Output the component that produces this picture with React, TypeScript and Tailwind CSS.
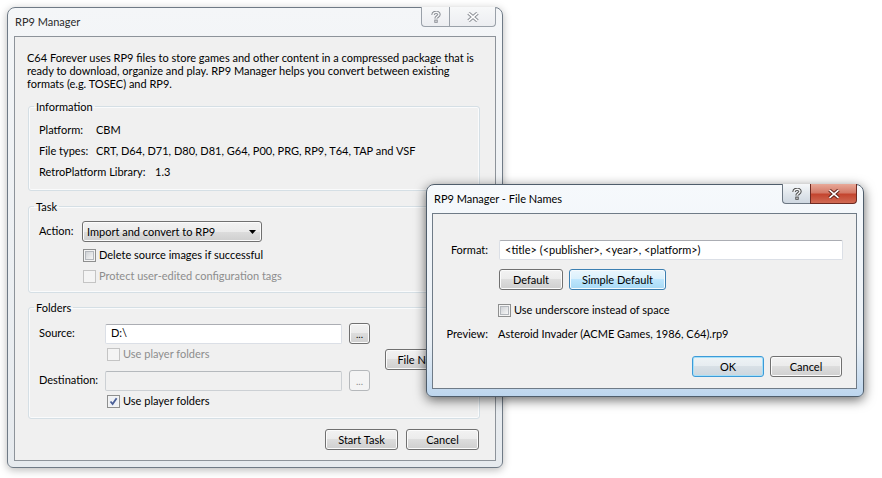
import type { ReactNode } from "react";

type Tone = "normal" | "hot" | "focus" | "disabled";

const tones: Record<Tone, string> = {
  normal:
    "border-[#707070] bg-[linear-gradient(#f2f2f2_0%,#ebebeb_50%,#dddddd_50%,#cfcfcf_100%)] shadow-[inset_0_0_0_1px_#fbfbfb] text-black",
  hot: "border-[#3c7fb1] bg-[linear-gradient(#eaf6fd_0%,#d9f0fc_50%,#bee6fd_50%,#a7d9f5_100%)] shadow-[inset_0_0_0_1px_#f5fbfe] text-black",
  focus:
    "border-[#3c9ad8] bg-[linear-gradient(#eef3f6_0%,#e6ecf0_50%,#d8e0e6_50%,#ccd6de_100%)] shadow-[inset_0_0_0_1px_#a6e0f8] text-black",
  disabled: "border-[#b5b8bb] bg-[#f4f4f4] text-[#8d8d8d]",
};

function Button({
  children,
  tone = "normal",
  className = "",
}: {
  children: ReactNode;
  tone?: Tone;
  className?: string;
}) {
  return (
    <div
      className={`flex h-[21px] items-center justify-center rounded-[3px] border leading-none ${tones[tone]} ${className}`}
    >
      {children}
    </div>
  );
}

function CheckBox({ checked = false, disabled = false }: { checked?: boolean; disabled?: boolean }) {
  if (disabled) {
    return <span className="block h-[13px] w-[13px] shrink-0 border border-[#c4c4c4] bg-[#f4f4f4]" />;
  }
  return (
    <span className="flex h-[13px] w-[13px] shrink-0 items-center justify-center border border-[#8e8f8f] bg-[#f4f4f4]">
      {checked ? (
        <svg width="9" height="9" viewBox="0 0 9 9" className="block">
          <rect x="0" y="0" width="9" height="9" fill="#eef1f6" />
          <path d="M1.5 4.5 L3.6 7 L7.6 1.2" stroke="#4a5f97" strokeWidth="1.8" fill="none" />
        </svg>
      ) : (
        <span className="block h-[9px] w-[9px] border border-[#b3b7bc] bg-[linear-gradient(135deg,#cfd2d6,#f6f6f6)]" />
      )}
    </span>
  );
}

function Check({
  children,
  checked,
  disabled,
}: {
  children: ReactNode;
  checked?: boolean;
  disabled?: boolean;
}) {
  return (
    <div className={`flex h-[21px] items-center gap-[3px] ${disabled ? "text-[#8d8d8d]" : "text-black"}`}>
      <CheckBox checked={checked} disabled={disabled} />
      <span>{children}</span>
    </div>
  );
}

function TextBox({ value, disabled, className = "" }: { value?: string; disabled?: boolean; className?: string }) {
  return (
    <div
      className={`flex h-[20px] items-center rounded-[2px] border pl-[5px] ${
        disabled
          ? "border-[#ccd0d4] border-t-[#b5b9bd] bg-[#f0f0f0]"
          : "border-[#dbdfe6] border-t-[#abadb3] bg-white"
      } ${className}`}
    >
      {value}
    </div>
  );
}

function Glyphs({ dark }: { dark?: boolean }) {
  const line = dark ? "#4e4e4e" : "#8a8e94";
  return {
    help: (
      <svg width="10" height="12" viewBox="0 0 10 12">
        <path d="M2 4 C2 0.5 8 0.5 8 3.6 C8 5.6 5 5.4 5 7.6" stroke={line} strokeWidth="3.4" fill="none" />
        <path d="M2 4 C2 0.5 8 0.5 8 3.6 C8 5.6 5 5.4 5 7.6" stroke="#f6f7f8" strokeWidth="1.4" fill="none" />
        <rect x="3.3" y="8.6" width="3.4" height="3.2" fill={line} />
        <rect x="4.3" y="9.6" width="1.4" height="1.2" fill="#f6f7f8" />
      </svg>
    ),
    close: (
      <svg width="12" height="10" viewBox="0 0 12 10">
        <path d="M1.5 1.2 L10.5 8.8 M10.5 1.2 L1.5 8.8" stroke={dark ? "#5a1f17" : line} strokeWidth="3.6" />
        <path d="M1.5 1.2 L10.5 8.8 M10.5 1.2 L1.5 8.8" stroke="#ffffff" strokeWidth="1.6" />
      </svg>
    ),
  };
}

function CaptionButtons({ active }: { active?: boolean }) {
  const g = Glyphs({ dark: active });
  return (
    <div className="-mt-[1px] flex h-[20px] self-start">
      <div
        className={`flex w-[28px] items-center justify-center rounded-bl-[4px] border border-t-0 border-r-0 ${
          active
            ? "border-[#6c7783] bg-[linear-gradient(#f6f8fa,#dfe5eb_55%,#cfd8e1)]"
            : "border-[#9aa1a9] bg-[linear-gradient(#f7f8f9,#eceef1)]"
        }`}
      >
        {g.help}
      </div>
      <div
        className={`flex w-[47px] items-center justify-center rounded-br-[4px] border border-t-0 ${
          active
            ? "border-[#6d2a22] bg-[linear-gradient(#e8a999,#d47a68_45%,#c4452f_55%,#d06b55)]"
            : "border-[#9aa1a9] bg-[linear-gradient(#f7f8f9,#eceef1)]"
        }`}
      >
        {g.close}
      </div>
    </div>
  );
}

function Group({ title, children, className = "" }: { title: string; children: ReactNode; className?: string }) {
  return (
    <fieldset
      className={`ml-[13px] w-[452px] rounded-[3px] border border-[#d5dfe5] shadow-[inset_0_0_0_1px_#fafbfc] ${className}`}
    >
      <legend className="ml-[5px] px-[2px] leading-[15px]">{title}</legend>
      {children}
    </fieldset>
  );
}

function MainWindow() {
  return (
    <div className="absolute left-[7px] top-[7px] flex h-[461px] w-[496px] flex-col rounded-t-[8px] rounded-b-[6px] border border-[#6f7a86] bg-[linear-gradient(#f4f6f8,#e6eaee)] px-[6px] pb-[6px] shadow-[0_2px_9px_rgba(0,0,0,0.28)]">
      <div className="flex h-[28px] items-center">
        <span className="flex-1 pl-[1px] text-[#2b2b2b]">RP9 Manager</span>
        <CaptionButtons />
      </div>
      <div className="flex flex-1 flex-col border border-[#8d939a] bg-[#f0f0f0]">
        <p className="pl-[12px] pt-[14px] leading-[13px]">
          C64 Forever uses RP9 files to store games and other content in a compressed package that is
          <br />
          ready to download, organize and play. RP9 Manager helps you convert between existing
          <br />
          formats (e.g. TOSEC) and RP9.
        </p>

        <Group title="Information" className="mt-[9px]">
          <div className="pb-[8px] pl-[10px] pt-[5px] leading-[21px]">
            <div className="flex">
              <span className="w-[57px]">Platform:</span>
              <span>CBM</span>
            </div>
            <div className="flex">
              <span className="w-[57px]">File types:</span>
              <span>CRT, D64, D71, D80, D81, G64, P00, PRG, RP9, T64, TAP and VSF</span>
            </div>
            <div className="flex">
              <span className="w-[116px]">RetroPlatform Library:</span>
              <span>1.3</span>
            </div>
          </div>
        </Group>

        <Group title="Task" className="mt-[8px]">
          <div className="pb-[5px] pl-[10px] pt-[7px]">
            <div className="flex items-center">
              <span className="w-[43px]">Action:</span>
              <Button className="w-[180px] !justify-between pl-[4px] pr-[5px]">
                <span>Import and convert to RP9</span>
                <svg width="7" height="4" viewBox="0 0 7 4">
                  <path d="M0 0 H7 L3.5 4 Z" fill="#000" />
                </svg>
              </Button>
            </div>
            <div className="ml-[44px] mt-[3px]">
              <Check>Delete source images if successful</Check>
              <Check disabled>Protect user-edited configuration tags</Check>
            </div>
          </div>
        </Group>

        <Group title="Folders" className="mt-[7px]">
          <div className="flex pb-[6px] pl-[10px] pt-[8px]">
            <div className="flex flex-col">
              <div className="flex h-[21px] items-center">
                <span className="w-[66px]">Source:</span>
                <TextBox value="D:\" className="w-[237px]" />
                <Button className="ml-[7px] w-[21px] text-[10px]">...</Button>
              </div>
              <div className="ml-[68px]">
                <Check disabled>Use player folders</Check>
              </div>
              <div className="mt-[5px] flex h-[21px] items-center">
                <span className="w-[66px]">Destination:</span>
                <TextBox disabled className="w-[237px]" />
                <Button tone="disabled" className="ml-[7px] w-[21px] text-[10px]">
                  ...
                </Button>
              </div>
              <div className="ml-[68px]">
                <Check checked>Use player folders</Check>
              </div>
            </div>
            <Button className="ml-[15px] mt-[26px] w-[86px]">File Names...</Button>
          </div>
        </Group>

        <div className="mr-[16px] mt-[10px] flex justify-end gap-[8px]">
          <Button className="w-[73px]">Start Task</Button>
          <Button className="w-[73px]">Cancel</Button>
        </div>
      </div>
    </div>
  );
}

function FileNamesWindow() {
  return (
    <div className="absolute left-[426px] top-[184px] flex h-[213px] w-[438px] flex-col rounded-t-[8px] rounded-b-[6px] border border-[#4f5d6b] bg-[linear-gradient(#f6f9fc_0%,#eaf0f6_75%,#bdd6ee_100%)] pb-[7px] pl-[5px] pr-[6px] shadow-[0_3px_12px_rgba(0,0,0,0.6)]">
      <div className="flex h-[28px] items-center">
        <span className="flex-1 pl-[2px] text-black">RP9 Manager - File Names</span>
        <CaptionButtons active />
      </div>
      <div className="flex flex-1 flex-col border border-[#6f7b87] bg-[#f0f0f0]">
        <div className="mt-[26px] flex h-[20px] items-center">
          <span className="w-[55px] text-right">Format:</span>
          <TextBox value="<title> (<publisher>, <year>, <platform>)" className="ml-[11px] w-[344px] pl-[4px]" />
        </div>
        <div className="ml-[66px] mt-[9px] flex gap-[6px]">
          <Button className="w-[64px]">Default</Button>
          <Button tone="hot" className="w-[97px]">
            Simple Default
          </Button>
        </div>
        <div className="ml-[65px] mt-[10px]">
          <Check>Use underscore instead of space</Check>
        </div>
        <div className="mt-[3px] flex h-[21px] items-center">
          <span className="w-[55px] text-right">Preview:</span>
          <span className="ml-[10px]">Asteroid Invader (ACME Games, 1986, C64).rp9</span>
        </div>
        <div className="mr-[14px] mt-[11px] flex justify-end gap-[6px]">
          <Button tone="focus" className="w-[72px]">
            OK
          </Button>
          <Button className="w-[72px]">Cancel</Button>
        </div>
      </div>
    </div>
  );
}

export default function App() {
  return (
    <div className="relative h-[478px] w-[882px] overflow-hidden bg-white font-['Lato',sans-serif] text-[11px] text-black">
      <MainWindow />
      <FileNamesWindow />
    </div>
  );
}
